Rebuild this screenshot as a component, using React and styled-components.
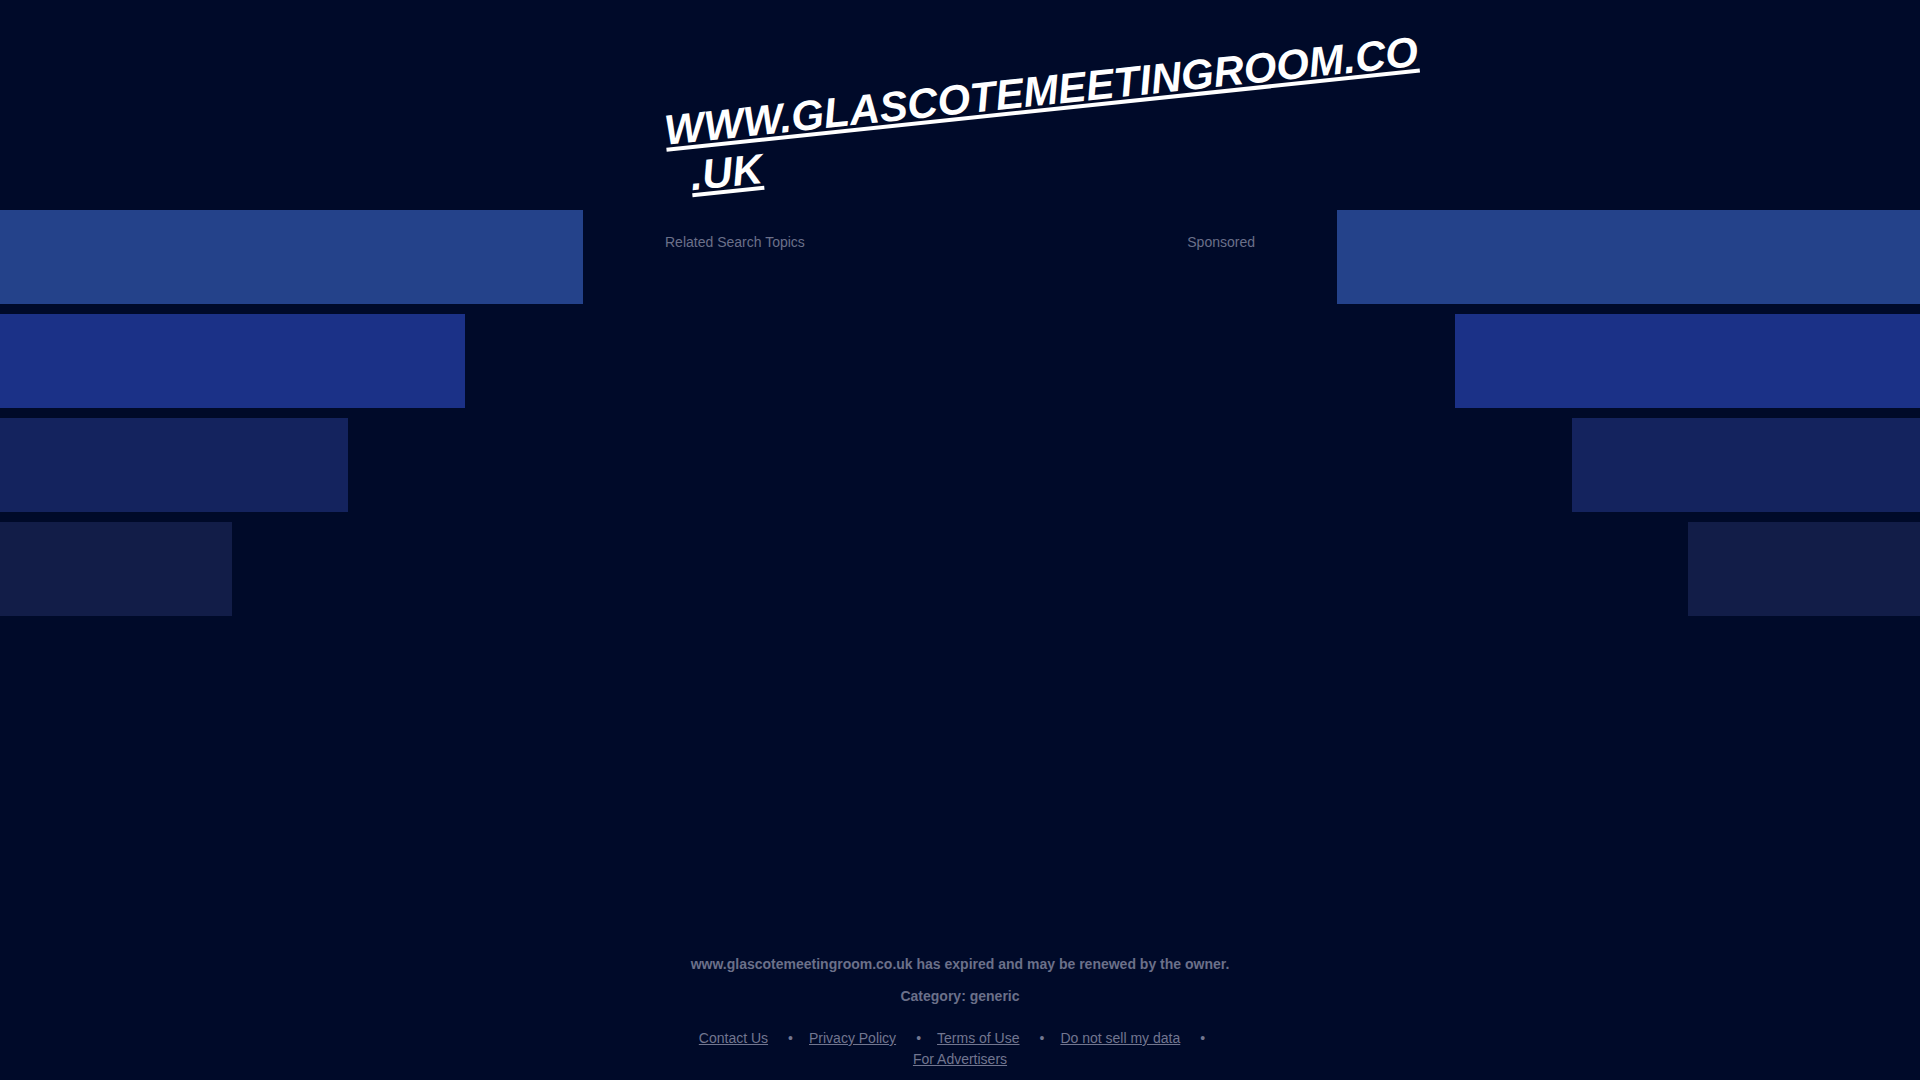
import React from "react";
import styled, { createGlobalStyle } from "styled-components";

const GlobalStyle = createGlobalStyle`
  html, body {
    margin: 0;
    padding: 0;
    background: #000a29;
    font-family: "Liberation Sans", Arial, sans-serif;
  }
  * { box-sizing: border-box; }
`;

const Page = styled.div`
  min-height: 100vh;
  display: flex;
  flex-direction: column;
  background: #000a29;
  overflow: hidden;
`;

const Main = styled.div`
  display: grid;
  grid-template-columns: 1fr 590px 1fr;
`;

const BarStack = styled.div`
  display: flex;
  flex-direction: column;
  align-items: ${(p) => (p.$side === "right" ? "flex-end" : "flex-start")};
  gap: 10px;
  padding-top: 210px;
`;

const Bar = styled.div`
  height: 94px;
  width: ${(p) => p.$w}px;
  background: ${(p) => p.$c};
`;

const Center = styled.div`
  display: flex;
  flex-direction: column;
`;

const Title = styled.h1`
  margin: 107px 0 0 -3px;
  font-size: 42px;
  line-height: 48px;
  font-weight: 700;
  font-style: italic;
  color: #ffffff;
  white-space: nowrap;
  transform: rotate(-6deg);
  transform-origin: left top;
`;

const TitleLine = styled.span`
  display: block;
  text-decoration: underline;
  padding-left: ${(p) => p.$indent || 0}px;
`;

const TopicsRow = styled.div`
  margin-top: 31px;
  display: flex;
  justify-content: space-between;
  font-size: 14px;
  line-height: 16px;
  color: #6b7089;
`;

const Footer = styled.footer`
  margin-top: auto;
  padding-bottom: 10px;
  display: flex;
  flex-direction: column;
  align-items: center;
  text-align: center;
  color: #6b7089;
  font-size: 14px;
`;

const FooterText = styled.p`
  margin: ${(p) => p.$mt || 0}px 0 0 0;
  line-height: 21px;
  font-weight: 700;
`;

const Links = styled.div`
  margin-top: 21px;
  width: 590px;
  line-height: 21px;
`;

const FooterLink = styled.a`
  color: #727690;
  text-decoration: underline;
  white-space: nowrap;
  cursor: pointer;
`;

const Sep = styled.span`
  display: inline-block;
  margin: 0 16px 0 20px;
  color: #727690;
`;

const bars = [
  { w: 583, c: "#24428a" },
  { w: 465, c: "#1b3187" },
  { w: 348, c: "#14235e" },
  { w: 232, c: "#121d48" },
];

const links = ["Contact Us", "Privacy Policy", "Terms of Use", "Do not sell my data"];

export default function App() {
  return (
    <>
      <GlobalStyle />
      <Page>
        <Main>
          <BarStack $side="left">
            {bars.map((b, i) => (
              <Bar key={i} $w={b.w} $c={b.c} />
            ))}
          </BarStack>
          <Center>
            <Title>
              <TitleLine>WWW.GLASCOTEMEETINGROOM.CO</TitleLine>
              <TitleLine $indent={21}>.UK</TitleLine>
            </Title>
            <TopicsRow>
              <span>Related Search Topics</span>
              <span>Sponsored</span>
            </TopicsRow>
          </Center>
          <BarStack $side="right">
            {bars.map((b, i) => (
              <Bar key={i} $w={b.w} $c={b.c} />
            ))}
          </BarStack>
        </Main>
        <Footer>
          <FooterText>
            www.glascotemeetingroom.co.uk has expired and may be renewed by the owner.
          </FooterText>
          <FooterText $mt={11}>Category: generic</FooterText>
          <Links>
            {links.map((l) => (
              <React.Fragment key={l}>
                <FooterLink>{l}</FooterLink>
                <Sep>•</Sep>
              </React.Fragment>
            ))}
            <FooterLink>For Advertisers</FooterLink>
          </Links>
        </Footer>
      </Page>
    </>
  );
}
